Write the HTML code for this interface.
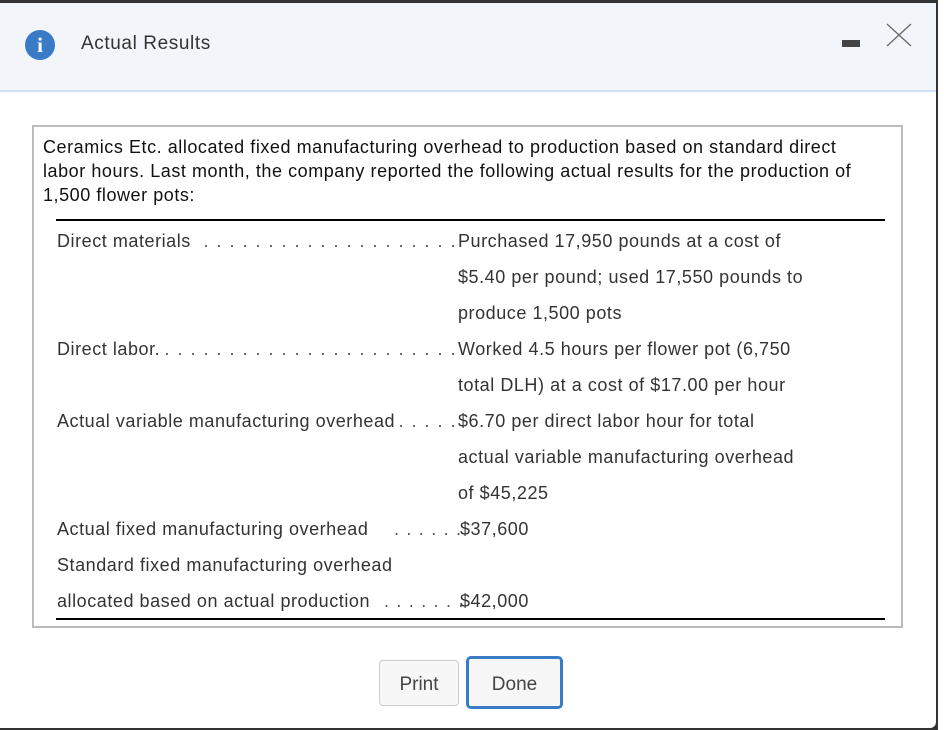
<!DOCTYPE html>
<html><head><style>
body{margin:0;width:944px;height:730px;background:#333;position:relative;overflow:hidden;font-family:"Liberation Sans",sans-serif}
.side{position:absolute;left:938px;top:0;width:6px;height:730px;background:#fff}
.dlg{position:absolute;left:0;top:3px;width:936px;height:725px;background:#fff;border-bottom-right-radius:6px;overflow:hidden}
.hdr{position:absolute;left:0;top:0;width:936px;height:87px;background:#f2f6fb;border-bottom:2px solid #cfe2f5}
.ic{position:absolute;left:25px;top:27px;width:30px;height:30px;border-radius:50%;background:#3a7bc8;color:#fff;font:bold 21px "Liberation Serif",serif;text-align:center;line-height:31px}
.ttl{position:absolute;left:81px;top:30px;font-size:19px;letter-spacing:0.6px;color:#333}
.min{position:absolute;left:842px;top:37px;width:18px;height:7px;background:#444}
.box{position:absolute;left:32px;top:122px;width:867px;height:499px;border:2px solid #bbb}
.intro{position:absolute;left:9px;top:8px;font-size:18px;letter-spacing:0.55px;line-height:24px;color:#111;white-space:nowrap}
.rule{position:absolute;left:22px;width:829px;height:2px;background:#000}
.t{position:absolute;font-size:18px;letter-spacing:0.55px;color:#333;white-space:nowrap}
.l{position:absolute;left:23px;width:400px;display:flex;font-size:18px;letter-spacing:0.55px;color:#333;white-space:nowrap;overflow:hidden}
.l .d{flex:1;overflow:hidden;direction:rtl;color:#555;letter-spacing:1.5px}
.btn{position:absolute;background:#f7f7f7;font-size:19px;color:#444;text-align:center;box-sizing:border-box}
</style></head><body>
<div class="side"></div>
<div class="dlg">
<div class="hdr">
<div class="ic">i</div>
<div class="ttl">Actual Results</div>
<div class="min"></div>
<svg style="position:absolute;left:886px;top:20px" width="26" height="24"><path d="M1 1L25 23M25 1L1 23" stroke="#666" stroke-width="1.3" fill="none"/></svg>
</div>
<div class="box">
<div class="intro">Ceramics Etc. allocated fixed manufacturing overhead to production based on standard direct<br>labor hours. Last month, the company reported the following actual results for the production of<br>1,500 flower pots:</div>
<div class="rule" style="top:92px"></div>
<div class="l" style="top:104px"><span>Direct materials&nbsp;</span><span class="d">. . . . . . . . . . . . . . . . . . . . . . . . . . . . . . . . . . . . . . . . .</span></div>
<div class="t" style="left:424px;top:104px">Purchased 17,950 pounds at a cost of</div>
<div class="t" style="left:424px;top:140px">$5.40 per pound; used 17,550 pounds to</div>
<div class="t" style="left:424px;top:176px">produce 1,500 pots</div>
<div class="l" style="top:212px"><span>Direct labor.&nbsp;</span><span class="d">. . . . . . . . . . . . . . . . . . . . . . . . . . . . . . . . . . . . . . . .</span></div>
<div class="t" style="left:424px;top:212px">Worked 4.5 hours per flower pot (6,750</div>
<div class="t" style="left:424px;top:248px">total DLH) at a cost of $17.00 per hour</div>
<div class="l" style="top:284px"><span>Actual variable manufacturing overhead</span><span class="d">. . . . . . . . . . . . . . . . .</span></div>
<div class="t" style="left:424px;top:284px">$6.70 per direct labor hour for total</div>
<div class="t" style="left:424px;top:320px">actual variable manufacturing overhead</div>
<div class="t" style="left:424px;top:356px">of $45,225</div>
<div class="t" style="left:23px;top:392px">Actual fixed manufacturing overhead</div>
<div class="t" style="left:360px;top:392px;letter-spacing:1.2px;color:#555">. . . . . .</div>
<div class="t" style="left:426px;top:392px">$37,600</div>
<div class="t" style="left:23px;top:428px">Standard fixed manufacturing overhead</div>
<div class="t" style="left:23px;top:464px">allocated based on actual production</div>
<div class="t" style="left:350px;top:464px;letter-spacing:1.2px;color:#555">. . . . . . .</div>
<div class="t" style="left:426px;top:464px">$42,000</div>
<div class="rule" style="top:491px"></div>
</div>
<div class="btn" style="left:379px;top:657px;width:80px;height:46px;border:1px solid #ccc;border-radius:4px;line-height:48px">Print</div>
<div class="btn" style="left:466px;top:653px;width:97px;height:53px;border:3px solid #3a7bc8;border-radius:5px;line-height:51px">Done</div>
</div>
</body></html>
